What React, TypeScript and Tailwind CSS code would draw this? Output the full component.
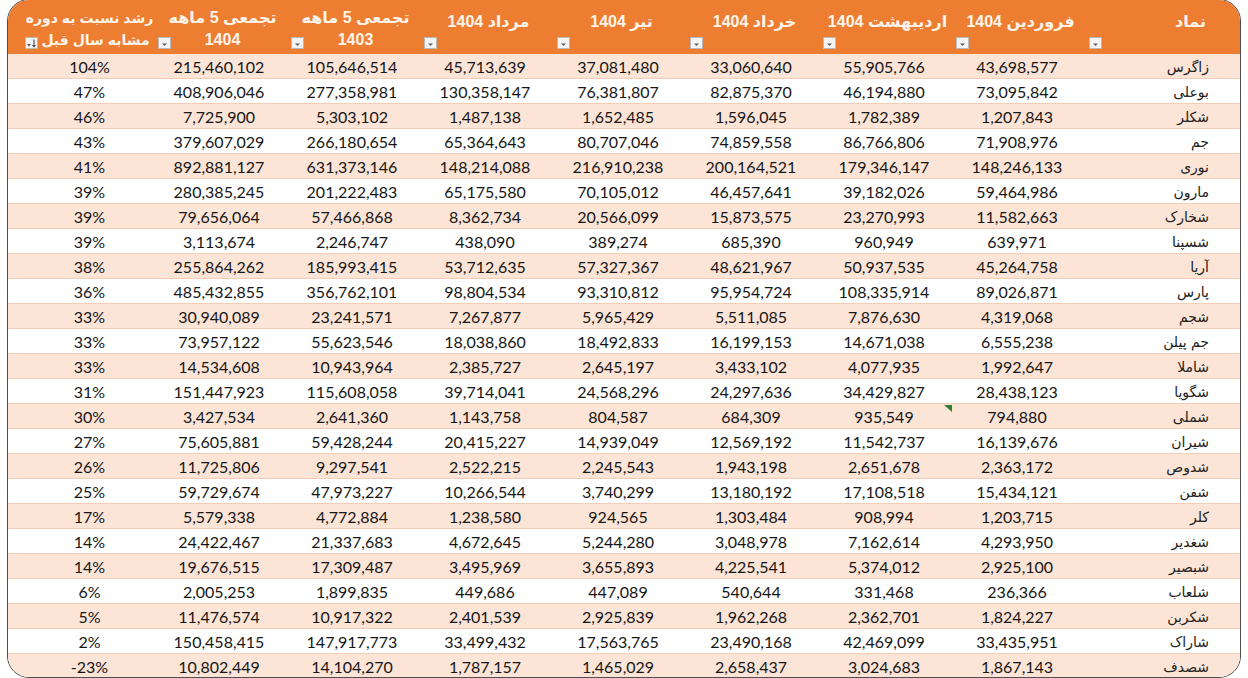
import React from 'react';

type Row = { sym: string; g: string; v: string[] };

// values in visual order, left to right: 5m 1404, 5m 1403, mordad, tir, khordad, ordibehesht, farvardin
const rows: Row[] = [
    { sym: 'زاگرس', g: '104%', v: ['215,460,102', '105,646,514', '45,713,639', '37,081,480', '33,060,640', '55,905,766', '43,698,577'] },
    { sym: 'بوعلی', g: '47%', v: ['408,906,046', '277,358,981', '130,358,147', '76,381,807', '82,875,370', '46,194,880', '73,095,842'] },
    { sym: 'شکلر', g: '46%', v: ['7,725,900', '5,303,102', '1,487,138', '1,652,485', '1,596,045', '1,782,389', '1,207,843'] },
    { sym: 'جم', g: '43%', v: ['379,607,029', '266,180,654', '65,364,643', '80,707,046', '74,859,558', '86,766,806', '71,908,976'] },
    { sym: 'نوری', g: '41%', v: ['892,881,127', '631,373,146', '148,214,088', '216,910,238', '200,164,521', '179,346,147', '148,246,133'] },
    { sym: 'مارون', g: '39%', v: ['280,385,245', '201,222,483', '65,175,580', '70,105,012', '46,457,641', '39,182,026', '59,464,986'] },
    { sym: 'شخارک', g: '39%', v: ['79,656,064', '57,466,868', '8,362,734', '20,566,099', '15,873,575', '23,270,993', '11,582,663'] },
    { sym: 'شسپنا', g: '39%', v: ['3,113,674', '2,246,747', '438,090', '389,274', '685,390', '960,949', '639,971'] },
    { sym: 'آریا', g: '38%', v: ['255,864,262', '185,993,415', '53,712,635', '57,327,367', '48,621,967', '50,937,535', '45,264,758'] },
    { sym: 'پارس', g: '36%', v: ['485,432,855', '356,762,101', '98,804,534', '93,310,812', '95,954,724', '108,335,914', '89,026,871'] },
    { sym: 'شجم', g: '33%', v: ['30,940,089', '23,241,571', '7,267,877', '5,965,429', '5,511,085', '7,876,630', '4,319,068'] },
    { sym: 'جم پیلن', g: '33%', v: ['73,957,122', '55,623,546', '18,038,860', '18,492,833', '16,199,153', '14,671,038', '6,555,238'] },
    { sym: 'شاملا', g: '33%', v: ['14,534,608', '10,943,964', '2,385,727', '2,645,197', '3,433,102', '4,077,935', '1,992,647'] },
    { sym: 'شگویا', g: '31%', v: ['151,447,923', '115,608,058', '39,714,041', '24,568,296', '24,297,636', '34,429,827', '28,438,123'] },
    { sym: 'شملی', g: '30%', v: ['3,427,534', '2,641,360', '1,143,758', '804,587', '684,309', '935,549', '794,880'] },
    { sym: 'شیران', g: '27%', v: ['75,605,881', '59,428,244', '20,415,227', '14,939,049', '12,569,192', '11,542,737', '16,139,676'] },
    { sym: 'شدوص', g: '26%', v: ['11,725,806', '9,297,541', '2,522,215', '2,245,543', '1,943,198', '2,651,678', '2,363,172'] },
    { sym: 'شفن', g: '25%', v: ['59,729,674', '47,973,227', '10,266,544', '3,740,299', '13,180,192', '17,108,518', '15,434,121'] },
    { sym: 'کلر', g: '17%', v: ['5,579,338', '4,772,884', '1,238,580', '924,565', '1,303,484', '908,994', '1,203,715'] },
    { sym: 'شغدیر', g: '14%', v: ['24,422,467', '21,337,683', '4,672,645', '5,244,280', '3,048,978', '7,162,614', '4,293,950'] },
    { sym: 'شبصیر', g: '14%', v: ['19,676,515', '17,309,487', '3,495,969', '3,655,893', '4,225,541', '5,374,012', '2,925,100'] },
    { sym: 'شلعاب', g: '6%', v: ['2,005,253', '1,899,835', '449,686', '447,089', '540,644', '331,468', '236,366'] },
    { sym: 'شکربن', g: '5%', v: ['11,476,574', '10,917,322', '2,401,539', '2,925,839', '1,962,268', '2,362,701', '1,824,227'] },
    { sym: 'شاراک', g: '2%', v: ['150,458,415', '147,917,773', '33,499,432', '17,563,765', '23,490,168', '42,469,099', '33,435,951'] },
    { sym: 'شصدف', g: '-23%', v: ['10,802,449', '14,104,270', '1,787,157', '1,465,029', '2,658,437', '3,024,683', '1,867,143'] },
];

const headers: string[][] = [
    ['تجمعی 5 ماهه', '1404'],
    ['تجمعی 5 ماهه', '1403'],
    ['مرداد 1404'],
    ['تیر 1404'],
    ['خرداد 1404'],
    ['اردیبهشت 1404'],
    ['فروردین 1404'],
];

const cols = 'grid grid-cols-[15px_133px_133px_133px_133px_133px_133px_133px_133px_1fr]';
const head = "font-['Liberation_Sans','DejaVu_Sans',sans-serif] font-bold text-[16px] text-[#fff4ea] whitespace-nowrap";

const FilterButton: React.FC<{ sorted?: boolean }> = ({ sorted }) => (
    <span className="absolute left-[2px] bottom-[5px] flex h-[12px] w-[13px] items-center justify-center border border-[#b9b9b9] bg-[#f4f4f4]">
        {sorted ? (
            <svg width="11" height="10" viewBox="0 0 11 10">
                <path d="M1 6 L5 6 L3 8.5 Z" fill="#505050" />
                <path d="M8 1.5 V8.5 M6.5 7 L8 8.8 L9.5 7" stroke="#505050" strokeWidth="1.1" fill="none" />
            </svg>
        ) : (
            <svg width="9" height="9" viewBox="0 0 9 9">
                <path d="M2 4.5 L7 4.5 L4.5 7 Z" fill="#606060" />
            </svg>
        )}
    </span>
);

const App: React.FC = () => {
    return (
        <div className="h-[678px] w-[1248px] overflow-hidden bg-white">
            <div className="-mt-px ml-[7px] h-[679px] w-[1234px] overflow-hidden rounded-[22px] border-[1.5px] border-[#4d4d4d] bg-white">
                {/* header */}
                <div className={`${cols} h-[54px] overflow-hidden bg-[#ed7d31] ${head}`}>
                    <div />
                    <div className="relative flex flex-col items-center pt-[7px] text-[14px] leading-[22px]">
                        <span dir="rtl">رشد نسبت به دوره</span>
                        <span dir="rtl" className="pl-[12px]">مشابه سال قبل</span>
                        <FilterButton sorted />
                    </div>
                    {headers.map((h, i) => (
                        <div key={i} className={`relative flex flex-col items-center leading-[22px] ${h.length > 1 ? 'pt-[7px]' : 'pt-[11px]'}`}>
                            {h.map((t, j) => (
                                <span key={j} dir="rtl">{t}</span>
                            ))}
                            <FilterButton />
                        </div>
                    ))}
                    <div className="relative flex justify-end pr-[34px] pt-[11px] leading-[22px]">
                        <span dir="rtl">نماد</span>
                        <FilterButton />
                    </div>
                </div>

                {/* body */}
                {rows.map((r, i) => (
                    <div
                        key={r.sym}
                        className={`${cols} h-[25px] items-center border-b border-[#f5cdb4] pt-[2px] font-['Lato',sans-serif] text-[16px] text-[#161616] ${i % 2 === 0 ? 'bg-[#fce4d6]' : 'bg-white'}`}
                    >
                        <div />
                        <div className="text-center leading-[22px]">{r.g}</div>
                        {r.v.map((n, j) => (
                            <div key={j} className="relative pr-[7px] text-center leading-[22px]">
                                {n}
                                {i === 14 && j === 5 && (
                                    <svg className="absolute right-[2px] -top-[1px]" width="8" height="7" viewBox="0 0 8 7">
                                        <path d="M0 0 H8 V7 Z" fill="#2f7d32" />
                                    </svg>
                                )}
                            </div>
                        ))}
                        <div dir="rtl" className="pr-[31px] text-right font-['DejaVu_Sans',sans-serif] text-[14px] leading-[22px] text-[#222222]">
                            {r.sym}
                        </div>
                    </div>
                ))}
            </div>
        </div>
    );
};

export default App;
